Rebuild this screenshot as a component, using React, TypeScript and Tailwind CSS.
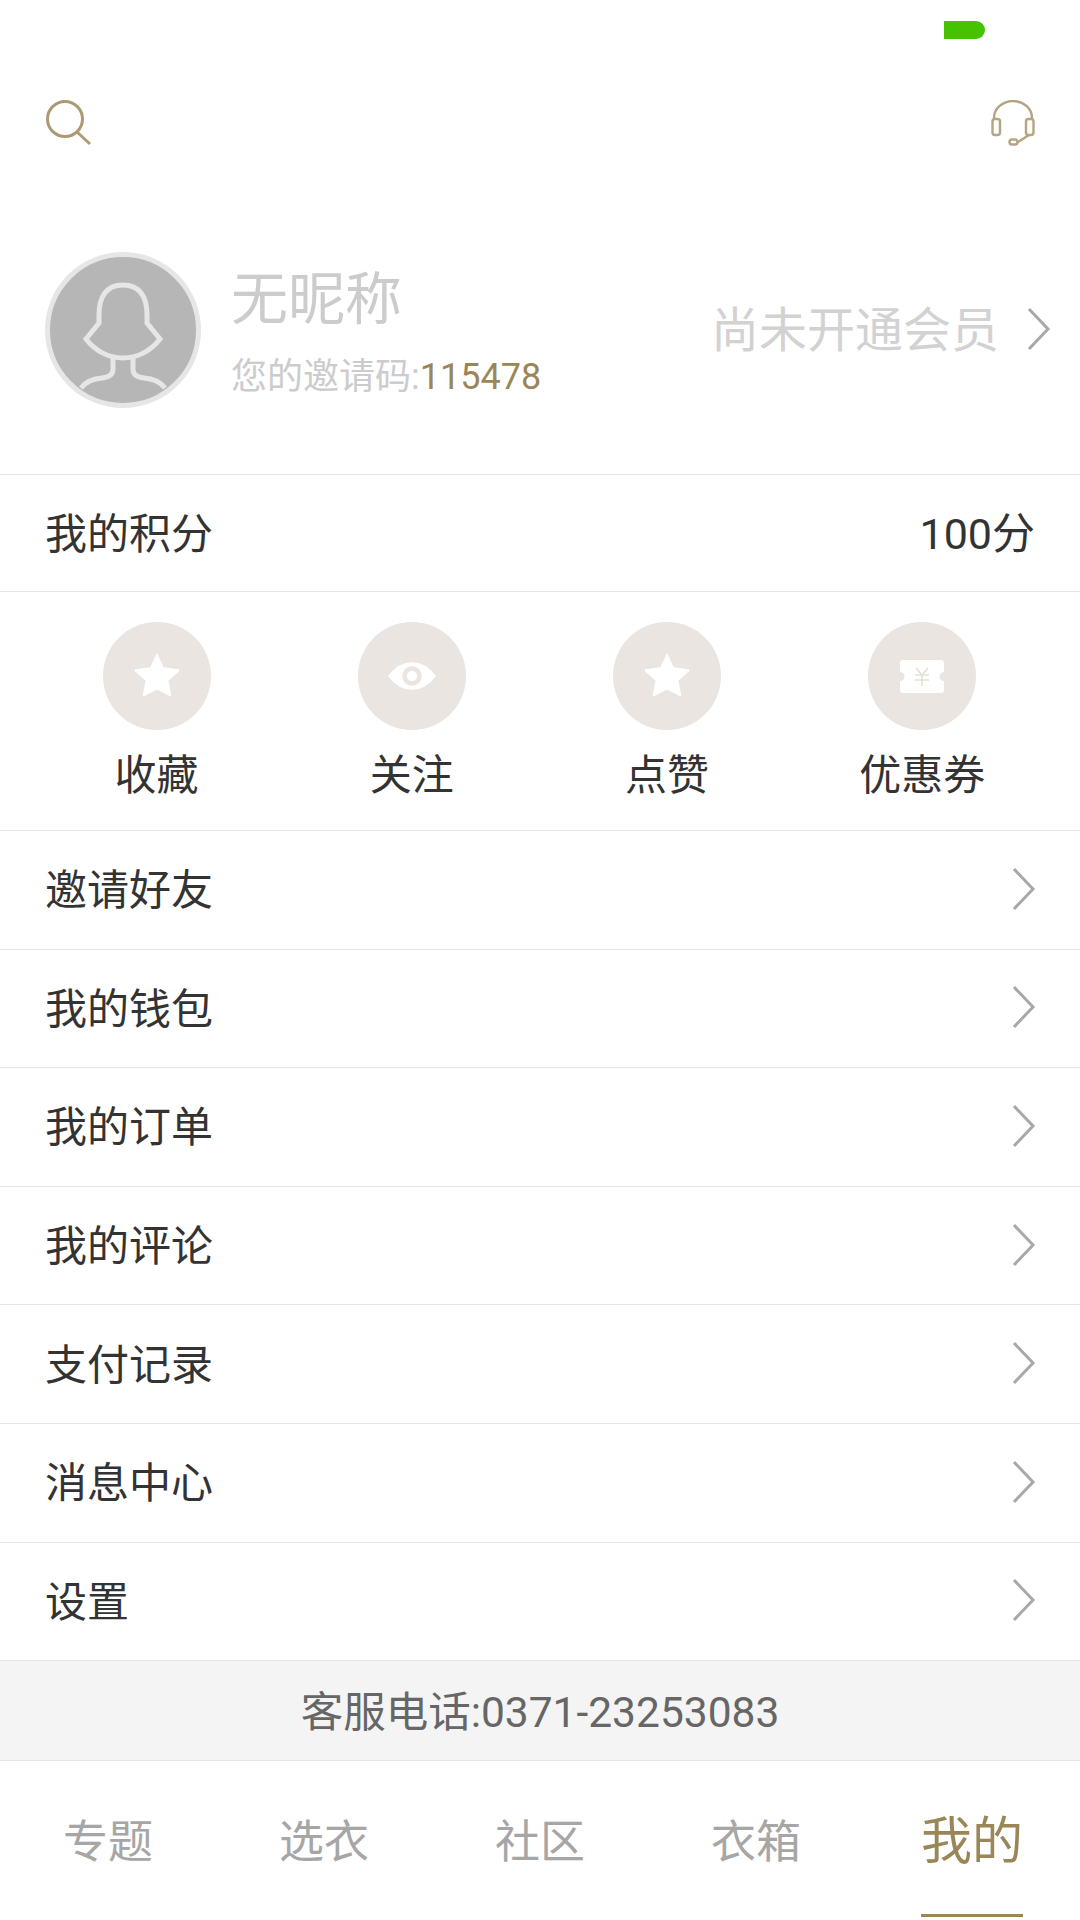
function Chevron({ color = '#a8a8a8' }: { color?: string }) {
  return (
    <svg width="24" height="44" viewBox="0 0 24 44" fill="none">
      <path d="M2 2 L21 22 L2 42" stroke={color} strokeWidth="3" />
    </svg>
  );
}

function Star() {
  return (
    <svg width="48" height="46" viewBox="0 0 50 48" className="-mt-[2px]">
      <path
        d="M25 1 L32 16 L48 18 Q49 19 48 20 L37 30 L40 45 Q40 47 38 46 L25 39 L12 46 Q10 47 10 45 L13 30 L2 20 Q1 19 2 18 L18 16 Z"
        fill="#fff"
      />
    </svg>
  );
}

function Eye() {
  return (
    <svg width="52" height="28" viewBox="0 0 52 30">
      <path d="M0 15 Q12 0 26 0 Q40 0 52 15 Q40 30 26 30 Q12 30 0 15 Z" fill="#fff" />
      <circle cx="26" cy="15" r="10.5" fill="#eae5e0" />
      <circle cx="26" cy="15" r="5.5" fill="#fff" />
    </svg>
  );
}

function Ticket() {
  return (
    <svg width="44" height="33" viewBox="0 0 44 33">
      <path
        d="M3 0 H41 Q44 0 44 3 V12 A4.5 4.5 0 0 0 44 21 V30 Q44 33 41 33 H3 Q0 33 0 30 V21 A4.5 4.5 0 0 0 0 12 V3 Q0 0 3 0 Z"
        fill="#fff"
      />
      <path d="M16 8 L22 15 L28 8 M22 15 V26 M15 15 H29 M15 20 H29" stroke="#e4dfd8" strokeWidth="1.5" fill="none" />
    </svg>
  );
}

const shortcuts = [
  { label: '收藏', icon: <Star /> },
  { label: '关注', icon: <Eye /> },
  { label: '点赞', icon: <Star /> },
  { label: '优惠券', icon: <Ticket /> },
];

const menuItems = ['邀请好友', '我的钱包', '我的订单', '我的评论', '支付记录', '消息中心', '设置'];

const tabs = ['专题', '选衣', '社区', '衣箱'];

export default function App() {
  return (
    <div
      className="w-[1080px] h-[1920px] bg-white flex flex-col overflow-hidden text-[#333]"
      style={{ fontFamily: 'Roboto, "Noto Sans CJK SC", sans-serif' }}
    >
      {/* Status bar */}
      <div className="h-[60px] pt-[21px] pl-[944px]">
        <div className="w-[41px] h-[18px] bg-[#45c300] rounded-r-[9px]" />
      </div>

      {/* Header */}
      <div className="h-[124px] flex items-center justify-between pt-[2px] pl-[46px] pr-[45px]">
        <svg width="46" height="46" viewBox="0 0 46 46" fill="none" stroke="#ad9a74" strokeWidth="3">
          <circle cx="19" cy="19" r="17.5" />
          <path d="M31 32 L44 44" />
        </svg>
        <svg width="44" height="46" viewBox="0 0 44 46" fill="none" stroke="#b5a482" strokeWidth="2.4">
          <path d="M3 20 V18 A19 17 0 0 1 41 18 V20" />
          <rect x="1.5" y="19" width="7.5" height="16" rx="2.5" />
          <rect x="35" y="19" width="7.5" height="16" rx="2.5" />
          <path d="M38 35 L27 42" />
          <rect x="18.5" y="39.5" width="8" height="5" rx="2.5" />
        </svg>
      </div>

      {/* Profile */}
      <div className="h-[291px] flex items-center border-b border-[#e6e6e6] pl-[45px] pr-[29px]">
        <div className="mt-[2px] w-[156px] h-[156px] rounded-full bg-[#b6b6b6] border-[5px] border-[#e6e6e6] overflow-hidden shrink-0">
          <svg width="146" height="146" viewBox="0 0 146 146" fill="none" stroke="#e6e6e6" strokeWidth="5">
            <path d="M63 101 V112 Q63 120 52 121 Q38 122 31 131" />
            <path d="M83 101 V112 Q83 120 94 121 Q108 122 115 131" />
            <path d="M73 28 C56 28 49 40 49 58 V66 L36 82 C46 95 60 101 73 101 C86 101 100 95 110 82 L97 66 V58 C97 40 90 28 73 28 Z" />
          </svg>
        </div>
        <div className="ml-[30px] mt-[15px] flex flex-col">
          <div className="text-[57px] leading-[70px] text-[#cccccc] -mt-[7px]">无昵称</div>
          <div className="text-[36px] leading-[50px] text-[#cccccc] mt-[17px]">
            您的邀请码:<span className="text-[#9b8658]">115478</span>
          </div>
        </div>
        <div className="ml-auto flex items-center text-[48px] text-[#d2d2d2]">
          <span className="mt-[4px]">尚未开通会员</span>
          <span className="ml-[28px] flex">
            <Chevron />
          </span>
        </div>
      </div>

      {/* Points */}
      <div className="h-[117px] flex items-center justify-between border-b border-[#e6e6e6] pl-[45px] pr-[45px] text-[42px]">
        <span className="mt-[3px]">我的积分</span>
        <span className="mt-[3px] text-[43px]">100分</span>
      </div>

      {/* Shortcuts */}
      <div className="h-[239px] grid grid-cols-4 pl-[29px] pr-[30px] border-b border-[#e6e6e6]">
        {shortcuts.map((s) => (
          <div key={s.label} className="flex flex-col items-center pt-[30px]">
            <div className="w-[108px] h-[108px] rounded-full bg-[#eae5e0] flex items-center justify-center">
              {s.icon}
            </div>
            <div className="text-[42px] leading-[60px] mt-[16px]">{s.label}</div>
          </div>
        ))}
      </div>

      {/* Menu */}
      {menuItems.map((item) => (
        <div
          key={item}
          className="h-[118.6px] flex items-center justify-between border-b border-[#e6e6e6] pl-[45px] pr-[44px] text-[42px]"
        >
          <span className="mt-[2px]">{item}</span>
          <span className="-mt-[2px] flex">
            <Chevron />
          </span>
        </div>
      ))}

      {/* Service phone */}
      <div className="h-[100px] flex items-center justify-center bg-[#f4f4f4] border-b border-[#e6e6e6] text-[42.5px] text-[#666]">
        <span className="mt-[4px]">客服电话:0371-23253083</span>
      </div>

      {/* Tab bar */}
      <div className="flex-1 flex">
        {tabs.map((t) => (
          <div key={t} className="flex-1 flex items-center justify-center pt-[4px] text-[45px] text-[#a6a6a6]">
            {t}
          </div>
        ))}
        <div className="flex-1 flex items-center justify-center pt-[4px] relative text-[51px] text-[#9b8658]">
          我的
          <div className="absolute bottom-[3px] w-[102px] h-[3px] bg-[#9b8658]" />
        </div>
      </div>
    </div>
  );
}
